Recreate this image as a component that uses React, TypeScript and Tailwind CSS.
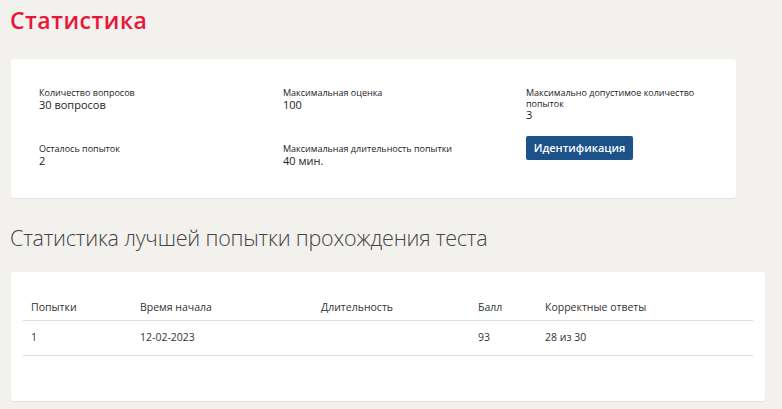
export default function App() {
  const font = { fontFamily: '"Open Sans", "Noto Sans", sans-serif' };
  return (
    <div className="h-[409px] w-[782px] overflow-hidden bg-[#f2f1ee] text-[#222]" style={font}>
      <h1 className="pl-[10px] pt-[4px] text-[23px] font-semibold leading-[32px] tracking-[0.5px] text-[#e8173a]">
        Статистика
      </h1>
      <div className="ml-[11px] mt-[23px] h-[139px] w-[725px] rounded-[3px] bg-white pl-[28px] pt-[28px] shadow-[0_1px_1px_rgba(0,0,0,0.06)]">
        <div className="grid grid-cols-[244px_243px_200px] gap-y-[22px] text-[9px] leading-[11px]">
          <div>
            <div>Количество вопросов</div>
            <div className="text-[11px] font-medium leading-[13px]">30 вопросов</div>
          </div>
          <div>
            <div>Максимальная оценка</div>
            <div className="text-[11px] leading-[13px]">100</div>
          </div>
          <div>
            <div>Максимально допустимое количество попыток</div>
            <div className="text-[11px] leading-[12px]">3</div>
          </div>
          <div>
            <div>Осталось попыток</div>
            <div className="text-[11px] leading-[13px]">2</div>
          </div>
          <div>
            <div>Максимальная длительность попытки</div>
            <div className="text-[11px] font-medium leading-[13px]">40 мин.</div>
          </div>
          <div>
            <button className="-mt-[8px] h-[24px] w-[107px] rounded-[2px] bg-[#1b5289] text-[11px] font-semibold text-white">
              Идентификация
            </button>
          </div>
        </div>
      </div>
      <h2 className="pl-[10px] pt-[26px] text-[21.5px] font-light leading-[28px] tracking-[-0.2px] text-[#444]">
        Статистика лучшей попытки прохождения теста
      </h2>
      <div className="ml-[11px] mt-[20px] h-[129px] w-[754px] rounded-[3px] bg-white px-[12px] pt-[26px] shadow-[0_1px_1px_rgba(0,0,0,0.06)]">
        <div className="text-[10.5px]">
          <div className="grid h-[23px] grid-cols-[109px_181px_157px_67px_1fr] items-center border-b border-[#dedede] pl-[8px] pb-[2px] font-medium text-[#333]">
            <div>Попытки</div>
            <div>Время начала</div>
            <div>Длительность</div>
            <div>Балл</div>
            <div>Корректные ответы</div>
          </div>
          <div className="grid h-[35px] grid-cols-[109px_181px_157px_67px_1fr] items-center border-b border-[#dedede] pl-[8px] text-[#333]">
            <div>1</div>
            <div>12-02-2023</div>
            <div></div>
            <div>93</div>
            <div>28 из 30</div>
          </div>
        </div>
      </div>
    </div>
  );
}
